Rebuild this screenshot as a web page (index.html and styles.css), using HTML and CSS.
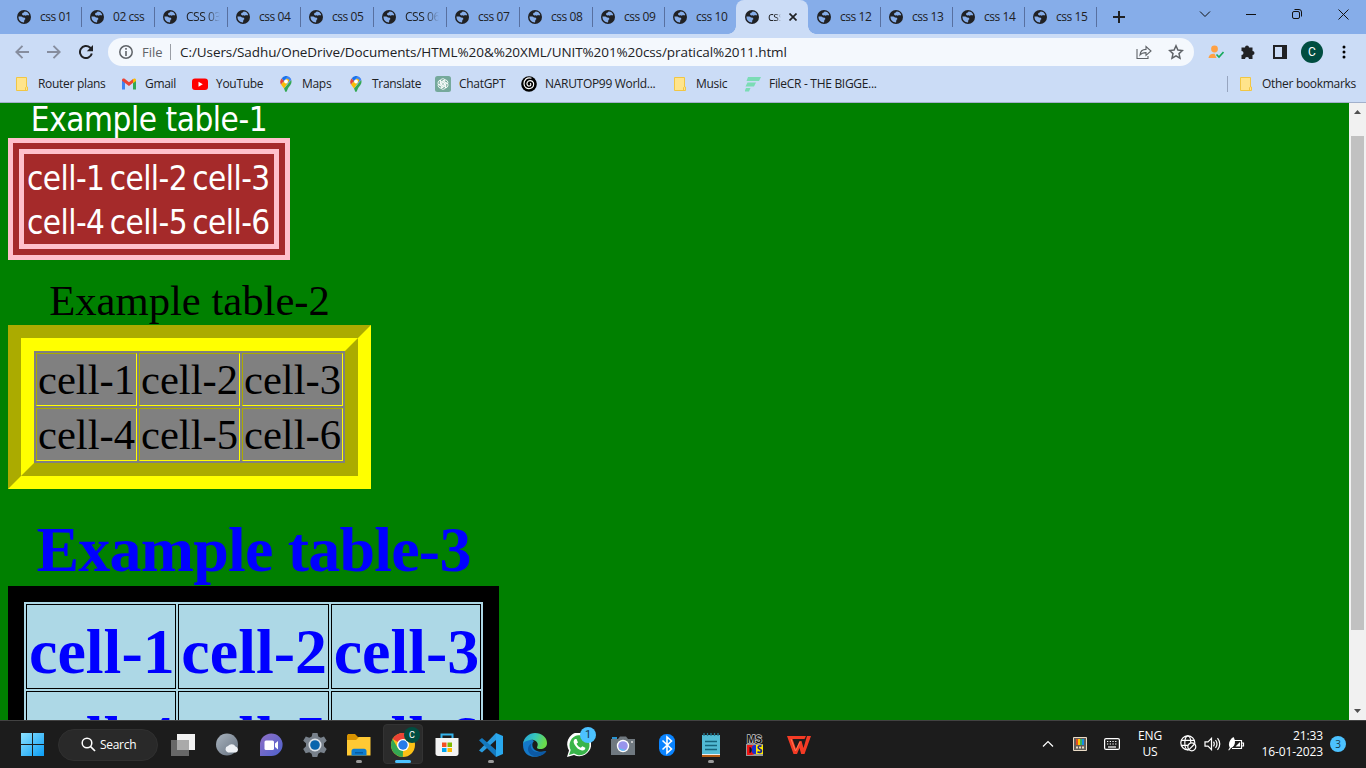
FILE: index.html
```html
<!DOCTYPE html>
<html lang="en">
<head>
<meta charset="utf-8">
<title>css 11</title>
<link rel="stylesheet" href="styles.css">
</head>
<body>
<svg class="defs" width="0" height="0" aria-hidden="true">
  <symbol id="globe" viewBox="0 0 14 14"><circle cx="7" cy="7" r="7" fill="#202124"/><path d="M7.6 1.500C9.800 1.500 11.500 2.700 12.200 4.800L11.300 5.500 10 5 8.800 5.700 7.800 5.200 6.200 5.400 5 4.500 5.400 3 6.800 2.600zM1.500 6.500 4.500 6.500 6 7.500 7.800 7.800 8.500 9 7.400 10 7 12.400C3.800 12.400 1.400 10 1.500 6.500z" fill="#86ade9"/></symbol>
  <symbol id="folder" viewBox="0 0 16 16"><path d="M2.500 1.500h10v9.500h1v3.500h-11z" fill="#ffe48b" stroke="#f1c644"/><path d="M11.500 14v-2.500l1-1" fill="none" stroke="#f1c644"/></symbol>
  <symbol id="pin" viewBox="0 0 16 16"><path d="M4 4 8 0a5.500 5.500 0 0 1 5.300 4L8 9z" fill="#4285f4"/><path d="M3.600 2.400 6 5 3 8.500A5.300 5.300 0 0 1 3.600 2.400z" fill="#ea4335"/><path d="M3 8.500 9 2.500l2.500 1.500L6 12.500z" fill="#fbbc04"/><path d="M13.300 4c.9 3.500-1.200 5.500-2.800 7.500C9.500 13 9 16 8 16s-1.200-2-2-3.500z" fill="#34a853"/><path d="M3.700 2.300A5.500 5.500 0 0 1 9.500.2L6 4.500z" fill="#1a73e8"/><circle cx="8" cy="5.500" r="1.900" fill="#fff"/></symbol>
</svg>

<header class="browser">
  <div class="tabstrip">
    <div class="tab"><svg><use href="#globe"/></svg><span>css 01</span></div>
    <div class="tab"><svg><use href="#globe"/></svg><span>02 css</span></div>
    <div class="tab cut"><svg><use href="#globe"/></svg><span>CSS 03</span></div>
    <div class="tab"><svg><use href="#globe"/></svg><span>css 04</span></div>
    <div class="tab"><svg><use href="#globe"/></svg><span>css 05</span></div>
    <div class="tab cut"><svg><use href="#globe"/></svg><span>CSS 06</span></div>
    <div class="tab"><svg><use href="#globe"/></svg><span>css 07</span></div>
    <div class="tab"><svg><use href="#globe"/></svg><span>css 08</span></div>
    <div class="tab narrow"><svg><use href="#globe"/></svg><span>css 09</span></div>
    <div class="tab narrow bare"><svg><use href="#globe"/></svg><span>css 10</span></div>
    <div class="tab active"><svg><use href="#globe"/></svg><span>css</span><svg class="x" viewBox="0 0 8 8"><path d="M.5.5l7 7M7.500.5l-7 7" stroke="#202124" stroke-width="1.700"/></svg></div>
    <div class="tab narrow"><svg><use href="#globe"/></svg><span>css 12</span></div>
    <div class="tab narrow"><svg><use href="#globe"/></svg><span>css 13</span></div>
    <div class="tab narrow"><svg><use href="#globe"/></svg><span>css 14</span></div>
    <div class="tab narrow"><svg><use href="#globe"/></svg><span>css 15</span></div>
    <div class="newtab"><svg width="12" height="12" viewBox="0 0 12 12"><path d="M6 0v12M0 6h12" stroke="#202124" stroke-width="2"/></svg></div>
    <div class="window-controls">
      <svg width="12" height="10" viewBox="0 0 12 10"><path d="M1 2.500l5 5 5-5" class="thin"/></svg>
      <svg width="10" height="10" viewBox="0 0 10 10"><path d="M0 5.500h10" class="thin"/></svg>
      <svg width="10" height="10" viewBox="0 0 10 10"><rect x=".5" y="2.500" width="7" height="7" rx="1.500" class="thin"/><path d="M2.500.5H7a2.500 2.500 0 0 1 2.500 2.500v4.500" class="thin"/></svg>
      <svg width="11" height="11" viewBox="0 0 11 11"><path d="M.5.5l10 10M10.500.5l-10 10" class="thin"/></svg>
    </div>
  </div>

  <div class="toolbar">
    <div class="nav">
      <svg width="14" height="14" viewBox="0 0 14 14"><path d="M14 7H1.500M7.500 .8 1.300 7l6.200 6.200" fill="none" stroke="#868d9e" stroke-width="1.900"/></svg>
      <svg width="14" height="14" viewBox="0 0 14 14"><path d="M0 7h12.500M6.500.8 12.700 7l-6.200 6.200" fill="none" stroke="#868d9e" stroke-width="1.900"/></svg>
      <svg width="14" height="14" viewBox="0 0 14 14"><path d="M12.800 8.500A6 6 0 1 1 11 2.600l1 1" fill="none" stroke="#202124" stroke-width="2"/><path d="M14 0v6.200H7.800z" fill="#202124"/></svg>
    </div>
    <div class="omnibox">
      <svg width="14" height="14" viewBox="0 0 14 14"><circle cx="7" cy="7" r="6.200" fill="none" stroke="#5f6368" stroke-width="1.500"/><path d="M7 3v1.700M7 6v5" stroke="#5f6368" stroke-width="1.600"/></svg>
      <span class="scheme">File</span>
      <span class="url">C:/Users/Sadhu/OneDrive/Documents/HTML%20&amp;%20XML/UNIT%201%20css/pratical%2011.html</span>
      <svg class="share" width="16" height="16" viewBox="0 0 16 16"><path d="M1 5v9.500h11V12M4 11c.3-3.700 2.500-5.500 6-5.600V2.500L15 7l-5 4.400V8.600C7.500 8.600 5.500 9 4 11z" fill="none" stroke="#5f6368" stroke-width="1.100"/></svg>
      <svg width="16" height="16" viewBox="0 0 16 16"><path d="M8 1.800l1.900 4.300 4.500.4-3.400 3.100 1 4.600L8 11.800l-4 2.400 1-4.600L1.600 6.500l4.500-.4z" fill="none" stroke="#5f6368" stroke-width="1.500"/></svg>
    </div>
    <div class="actions">
      <svg width="16" height="14" viewBox="0 0 16 14"><circle cx="6.500" cy="4" r="3.400" fill="#ffa143"/><path d="M.5 13c.2-3 2.500-4.500 6-4.300L8.500 13z" fill="#ffa143"/><path d="M8.500 9.500 11 12l4.500-5" fill="none" stroke="#17aa5c" stroke-width="1.600"/></svg>
      <svg width="16" height="16" viewBox="0 0 16 16"><path d="M1.500 3.500H5a2 2 0 1 1 4 0h3.500V7a2 2 0 1 1 0 4v4H9a2 2 0 0 0-4 0H1.500v-4a2 2 0 0 0 0-4z" fill="#202124"/></svg>
      <svg width="14" height="14" viewBox="0 0 14 14"><path d="M1 1h12v12H1z" fill="none" stroke="#202124" stroke-width="2"/><path d="M9 1h4v12H9z" fill="#202124"/></svg>
      <span class="avatar">C</span>
      <svg width="4" height="14" viewBox="0 0 4 14"><circle cx="2" cy="2" r="1.500"/><circle cx="2" cy="7" r="1.500"/><circle cx="2" cy="12" r="1.500"/></svg>
    </div>
  </div>

  <nav class="bookmarks">
    <a class="w107"><svg><use href="#folder"/></svg>Router plans</a>
    <a class="w71"><svg viewBox="0 0 16 16"><path d="M1 13.500V3.500l3 2.400v7.600z" fill="#4285f4"/><path d="M12 13.500V5.900l3-2.400v10z" fill="#34a853"/><path d="M1 5V4c0-1.500 1.500-2 2.700-1.200L8 6.200l4-3.200v3.800L8 10 1 4.800z" fill="#ea4335"/><path d="M12 3c1.300-1 3-.500 3 1v1l-3 2.200z" fill="#fbbc04"/></svg>Gmail</a>
    <a class="w86"><svg viewBox="0 0 16 16"><rect y="2.500" width="16" height="11.500" rx="3" fill="#f00"/><path d="M6.500 5.700v5l4.300-2.500z" fill="#fff"/></svg>YouTube</a>
    <a class="w70"><svg><use href="#pin"/></svg>Maps</a>
    <a class="w87"><svg><use href="#pin"/></svg>Translate</a>
    <a class="w86"><svg viewBox="0 0 16 16"><rect width="16" height="16" rx="2.500" fill="#75a99b"/><g fill="none" stroke="#fff" stroke-width=".8"><path id="petal" d="M5.200 9.500V5.200a2.700 2.700 0 0 1 5-1.200L6.800 6v3.500"/><use href="#petal" transform="rotate(60 8 8)"/><use href="#petal" transform="rotate(120 8 8)"/><use href="#petal" transform="rotate(180 8 8)"/><use href="#petal" transform="rotate(240 8 8)"/><use href="#petal" transform="rotate(300 8 8)"/></g></svg>ChatGPT</a>
    <a class="w151"><svg viewBox="0 0 16 16"><circle cx="8" cy="8" r="7.800"/><path d="M10.500 2.200C6 .8 2.800 4 3 8c.3 3.500 3 5 6 4.500 3-.5 4.500-3.500 3.300-6C11 4 7.500 4 6.300 6.300c-1 2 .3 4 2 3.700 1.700-.2 2-2.200.7-2.700" fill="none" stroke="#fff" stroke-width="1.200"/></svg>NARUTOP99 World...</a>
    <a class="w73"><svg><use href="#folder"/></svg>Music</a>
    <a><svg viewBox="0 0 16 16"><path d="M3 1h13l-2 4H1.500zM2.500 6.500H11l-2 4H.5zM1 12h4.500l-1.500 3.500H-.5z" fill="#7bdcb5"/></svg>FileCR - THE BIGGE...</a>
    <a class="other"><svg><use href="#folder"/></svg>Other bookmarks</a>
  </nav>
</header>

<div class="viewport">
  <main class="page">
    <table class="t1">
      <caption>Example table-1</caption>
      <tr><td>cell-1</td><td>cell-2</td><td>cell-3</td></tr>
      <tr><td>cell-4</td><td>cell-5</td><td>cell-6</td></tr>
    </table>
    <table class="t2">
      <caption>Example table-2</caption>
      <tr><td>cell-1</td><td>cell-2</td><td>cell-3</td></tr>
      <tr><td>cell-4</td><td>cell-5</td><td>cell-6</td></tr>
    </table>
    <table class="t3">
      <caption>Example table-3</caption>
      <tr><td>cell-1</td><td>cell-2</td><td>cell-3</td></tr>
      <tr><td>cell-4</td><td>cell-5</td><td>cell-6</td></tr>
    </table>
  </main>
  <div class="scrollbar">
    <svg width="17" height="17" viewBox="0 0 17 17"><path d="M5 11h7L8.500 7z" fill="#505050"/></svg>
    <div class="track"><div class="thumb"></div></div>
    <svg width="17" height="17" viewBox="0 0 17 17"><path d="M5 6h7l-3.500 4z" fill="#505050"/></svg>
  </div>
</div>

<footer class="taskbar">
  <svg class="start" width="23" height="23" viewBox="0 0 23 23"><defs><linearGradient id="win" gradientUnits="userSpaceOnUse" x2="23" y2="23"><stop stop-color="#8de2ff"/><stop offset="1" stop-color="#0a9df5"/></linearGradient></defs><path d="M0 0h11v11H0zM12 0h11v11H12zM0 12h11v11H0zM12 12h11v11H12z" fill="url(#win)"/></svg>
  <div class="search"><svg width="15" height="15" viewBox="0 0 15 15"><circle cx="6" cy="6" r="4.800" fill="none" stroke="#fff" stroke-width="1.500"/><path d="M9.500 9.500l4.500 4.500" stroke="#fff" stroke-width="1.700"/></svg>Search</div>
  <div class="apps">
    <div class="app"><svg viewBox="0 0 24 24"><path d="M6 1h18v16H6z" fill="#f2f2f2"/><path d="M0 7h18v16H0z" fill="#686868"/><path d="M6 7h12v10H6z" fill="#aaa"/></svg></div>
    <div class="app"><svg viewBox="0 0 24 24"><defs><linearGradient id="moon" x2="1" y2="1"><stop stop-color="#a9b3bf"/><stop offset="1" stop-color="#66727f"/></linearGradient></defs><circle cx="12" cy="11.500" r="11" fill="url(#moon)"/><path d="M13 19.500a3.300 3.300 0 0 1 0-6.400 4.500 4.500 0 0 1 7.500.3 3.200 3.200 0 0 1 .5 6.100z" fill="#eef1f5"/></svg></div>
    <div class="app"><svg viewBox="0 0 24 24"><defs><linearGradient id="chat" x2="1" y2="1"><stop stop-color="#8f6fc5"/><stop offset="1" stop-color="#4c61cd"/></linearGradient></defs><path d="M1 23V12A11.300 11.300 0 1 1 12 23z" fill="url(#chat)"/><rect x="5.500" y="7.500" width="9.500" height="9.500" rx="1.500" fill="#fff"/><path d="M16 10.500l3-2.500v8.500l-3-2.500z" fill="#fff"/></svg></div>
    <div class="app"><svg viewBox="0 0 24 24"><path d="M9.500 0h5l.8 3.500 2.500 1.300L21 3.500l2.700 4.300-2.700 2.500v3l2.700 2.600-2.500 4.400-3.600-1-2.400 1.400-.9 3.300H9.500l-.9-3.300-2.400-1.400-3.500 1-2.500-4.400L3 13.300v-3L.2 7.800 2.800 3.500l3.500 1.200L8.700 3.500z" fill="#78818b"/><circle cx="12" cy="12" r="6.500" fill="#dde3e9"/><circle cx="12" cy="12" r="4.800" fill="#0865ad"/></svg></div>
    <div class="app running"><svg viewBox="0 0 24 24"><path d="M0 2.500 1 1h7l3 3h11v5H0z" fill="#d89300"/><path d="M0 7h9l3-3h11.500v18.500H0z" fill="#ffc934"/><path d="M4.500 22.500V18c0-1.300 1-2.300 2.300-2.300h10.400c1.300 0 2.300 1 2.300 2.300v4.500z" fill="#0d7dd0"/><path d="M8 19h8v1.500H8z" fill="#065b9f"/></svg></div>
    <div class="app current"><svg viewBox="0 0 24 24"><circle cx="12" cy="12" r="12" fill="#fbc116"/><path d="M12 12 1.600 6A12 12 0 0 1 22.400 6H12z" fill="#ea4335"/><path d="M1.600 6 6.800 15 12 17.500l-.2 6.500A12 12 0 0 1 1.600 6z" fill="#34a853"/><circle cx="12" cy="12" r="6" fill="#fff"/><circle cx="12" cy="12" r="4.700" fill="#277be8"/></svg><span class="profile">C</span></div>
    <div class="app"><svg viewBox="0 0 24 24"><path d="M6.500 6V1.500h11V6" fill="none" stroke="#35b3ec" stroke-width="2"/><path d="M.5 5h23v15.500c0 1.500-1 2.500-2.500 2.500H3C1.500 23 .5 22 .5 20.500z" fill="#f3f3f3"/><path d="M7 9.500h4.500V14H7z" fill="#f25022"/><path d="M12.500 9.500H17V14h-4.500z" fill="#7fba00"/><path d="M7 15h4.500v4H7z" fill="#00a4ef"/><path d="M12.500 15H17v4h-4.500z" fill="#ffb900"/></svg></div>
    <div class="app running"><svg viewBox="0 0 24 24"><path d="M17 0v7L3 19.500l-3-2z" fill="#2a9cdf"/><path d="M17 24v-7L3 5 0 7.200z" fill="#1478bd"/><path d="M17 0l7 3v18l-7 3z" fill="#29a8ee"/></svg></div>
    <div class="app"><svg viewBox="0 0 24 24"><defs><linearGradient id="edge" x2="1" y2=".3"><stop stop-color="#249ddb"/><stop offset=".5" stop-color="#35c5bd"/><stop offset="1" stop-color="#6adb4b"/></linearGradient></defs><path d="M0 12C0 5 6 4 11 8c-3 3-2 8 3 10 3 1.200 6 1 9 0-6 9-23 8-23-6z" fill="#1478c8"/><path d="M0 11C1 4 6 0 12 0c7 0 12 4.500 12 10 0 4-3 6-7 6-3 0-3.500-1-2.500-3C16 9 11 6 7 7c-4 .7-6.500 2-7 4z" fill="url(#edge)"/><path d="M8.500 10.500c-3 6 4 11 14 7.500.6-.2 1 .2.5 1C17 26 5 24 5 16c0-2.500 1.500-4.500 3.500-5.500z" fill="#0c59a4"/></svg></div>
    <div class="app"><svg viewBox="0 0 24 24"><path d="M0 24l2-6.500A12 12 0 1 1 7 22z" fill="#fff"/><path d="M2 22l1.700-5A10 10 0 1 1 7 20.600z" fill="#39b54a"/><path d="M8 6c-1.500 1-2 3-.5 5.500 2 3.500 4.500 5.500 7.500 6 2 .2 3.500-1 3.300-2.700l-3-1.500-1.500 1.500c-2-.8-3.300-2-4.300-4L11 9.500 9.500 6z" fill="#fff"/></svg><span class="badge">1</span></div>
    <div class="app"><svg viewBox="0 0 24 24"><path d="M1 4h5v3H1z" fill="#2994d1"/><path d="M0 6h7l2-2.500h6L17 6h7v16H0z" fill="#707980"/><circle cx="12" cy="13" r="6.200" fill="#fff"/><circle cx="12" cy="13" r="4.800" fill="#9894ec"/><path d="M7.700 15a4.800 4.800 0 0 0 7 2z" fill="#5ac3f6"/><circle cx="21" cy="9" r="1" fill="#ddd"/></svg></div>
    <div class="app"><svg viewBox="0 0 24 24"><rect x="4" y="1" width="16" height="22" rx="7.500" fill="#0a84ff"/><path d="M7.500 7.500l9 8.500-4.500 4V4l4.500 4-9 8.500" fill="none" stroke="#fff" stroke-width="1.600"/></svg></div>
    <div class="app running"><svg viewBox="0 0 24 24"><path d="M3 2h18v19H3z" fill="#52bbd5"/><path d="M3 21h18v1H3z" fill="#eee"/><path d="M3 22h18v2H3z" fill="#b45d15"/><path d="M6 8.500h12M6 12.500h12M6 16.500h12" stroke="#16657c" stroke-width="1.300"/><path d="M5 0v3M8.500 0v3M12 0v3M15.500 0v3M19 0v3" stroke="#267c94" stroke-width="1.300"/></svg></div>
    <div class="app"><svg viewBox="0 0 24 24" class="msdos"><text x="4" y="9.500" font-size="10" fill="#111" stroke="#c4c4c4" stroke-width="1.400" paint-order="stroke" textLength="15" lengthAdjust="spacingAndGlyphs">MS</text><path d="M3 11h17v12H3z" fill="#999"/><path d="M4 12h4.500c6 0 6 10 0 10H4z" fill="#f01414"/><ellipse cx="12" cy="16.500" rx="3.500" ry="4.500" fill="#1732d0"/><path d="M13 12h7v9h-7z" fill="#ffe900"/><path d="M6.500 14v6c3 0 3-6 0-6z" fill="#111"/><path d="M18.500 13.500c-2-1.500-4 0-3 1.800 1 1.200 3 .7 3 2.700 0 1.500-2.500 2-4 .7" fill="none" stroke="#17209c" stroke-width="1.700"/></svg></div>
    <div class="app"><svg viewBox="0 0 24 24"><path d="M0 3h19l-1.500 3H5.500l3.500 10L12.500 8h2l2 7L20 3h4l-6.500 18h-3.300L12.500 15 10 21H6.500z" fill="#f43b25"/><path d="M4 6l4.500 12L13 9" fill="none" stroke="#ff7a52" stroke-width="1"/></svg></div>
  </div>
  <div class="tray">
    <div class="slot"><svg width="12" height="8" viewBox="0 0 12 8"><path d="M1 6.500l5-5 5 5" class="glyph"/></svg></div>
    <div class="slot"><svg width="14" height="14" viewBox="0 0 14 14"><path d="M.5.5h13v13H.5z" fill="#625e58" stroke="#eadbc6"/><path d="M3 2h2v6H3z" fill="#e34c26"/><path d="M5 2h2v6H5z" fill="#ffc500"/><path d="M7 2h2v6H7z" fill="#35b45c"/><path d="M9 2h2v6H9z" fill="#188be6"/><path d="M3 9.500h2v2H3zM6 9.500h2v2H6zM9 9.500h2v2H9z" fill="#eadbc6"/></svg></div>
    <div class="slot"><svg width="16" height="12" viewBox="0 0 16 12"><rect x=".6" y=".6" width="14.800" height="10.800" rx="1.500" class="glyph"/><path d="M3 3.500h10M3 6h10" class="glyph" stroke-dasharray="1.300 1.400"/><path d="M4 9h8" class="glyph"/></svg></div>
    <div class="lang">ENG<br>US</div>
    <div class="status">
      <svg width="17" height="17" viewBox="0 0 17 17"><circle cx="7.800" cy="7.800" r="7" class="glyph"/><ellipse cx="7.800" cy="7.800" rx="3" ry="7" class="glyph"/><path d="M1.200 5.300h13M1.200 10.300h8" class="glyph"/><circle cx="11.800" cy="11.800" r="4" fill="#1c1c1c" stroke="#fff" stroke-width="1.200"/><path d="M9 14.600l5.600-5.600" class="glyph"/></svg>
      <svg width="17" height="14" viewBox="0 0 17 14"><path d="M1 4.800h3L7.500 1.300v11.400L4 9.200H1zM9.500 4.700q1.500 2.300 0 4.600M11.500 3q3 4 0 8M13.500 1.200q4.500 5.800 0 11.600" class="glyph"/></svg>
      <svg width="17" height="14" viewBox="0 0 17 14"><path d="M5 3.500h8.500v8H4M14 6h1.500v3H14" class="glyph"/><path d="M7.500 9.500h4.500V5z" fill="#fff"/><path d="M5.500 0C8 4 7.500 9 3 11L1 13.500.3 13l1.500-2.500C-.5 7 2 2 5.500 0z" fill="#fff"/></svg>
    </div>
    <div class="clock">21:33<br>16-01-2023</div>
    <span class="count">3</span>
  </div>
</footer>
</body>
</html>
```
FILE: styles.css
```css
* { box-sizing: border-box; }

body {
  margin: 0;
  width: 1366px;
  height: 768px;
  overflow: hidden;
  display: flex;
  flex-direction: column;
  font-family: "Segoe UI", "Open Sans", "Noto Sans", sans-serif;
  font-size: 12px;
  color: #202124;
}

svg { flex: none; display: block; }
.defs { display: none; }

/* Browser chrome */
.browser {
  height: 103px;
  background: #cbdcf6;
  border-bottom: 1px solid #a2b0cb;
  flex: none;
}

.tabstrip {
  display: flex;
  height: 34px;
  padding-left: 8px;
  background: #86ade9;
}

.tab {
  position: relative;
  width: 73px;
  padding-left: 9px;
  display: flex;
  align-items: center;
  flex: none;
  white-space: nowrap;
  font-size: 12px;
  letter-spacing: -0.45px;
}
.tab.narrow, .tab.active { width: 72px; }
.tab svg { width: 14px; height: 14px; margin-right: 9px; }
.tab span { padding-bottom: 1px; }
.tab::after {
  content: "";
  position: absolute;
  right: -1px;
  top: 7px;
  height: 20px;
  width: 1px;
  background: #5870a0;
}
.tab.cut span {
  width: 34px;
  overflow: hidden;
  -webkit-mask-image: linear-gradient(90deg, #000 60%, transparent);
  mask-image: linear-gradient(90deg, #000 60%, transparent);
}
.tab.bare::after { display: none; }
.tab.active {
  background: #cbdcf6;
  border-radius: 8px 8px 0 0;
}
.tab.active span {
  width: 13px;
  overflow: hidden;
  -webkit-mask-image: linear-gradient(90deg, #000 60%, transparent);
  mask-image: linear-gradient(90deg, #000 60%, transparent);
}
.tab.active .x { width: 8px; height: 8px; margin: 0 0 0 8px; }
.tab.active::before,
.tab.active::after {
  content: "";
  position: absolute;
  top: auto;
  bottom: 0;
  width: 8px;
  height: 8px;
}
.tab.active::before { left: -8px; background: radial-gradient(circle at 0 0, transparent 7.5px, #cbdcf6 8px); }
.tab.active::after { right: -8px; background: radial-gradient(circle at 100% 0, transparent 7.5px, #cbdcf6 8px); }

.newtab { width: 46px; display: flex; align-items: center; justify-content: center; }
.window-controls {
  margin-left: auto;
  width: 184px;
  height: 28px;
  display: grid;
  grid-template-columns: repeat(4, 46px);
  place-items: center;
}
.thin { fill: none; stroke: #111; stroke-width: 1; }

.toolbar { display: flex; align-items: center; height: 36px; }
.nav {
  width: 108px;
  padding-left: 15px;
  display: flex;
  gap: 18px;
}
.omnibox {
  width: 1086px;
  height: 28px;
  padding: 0 10px 0 11px;
  display: flex;
  align-items: center;
  border-radius: 14px;
  background: #f4f8fd;
  font-size: 13px;
}
.scheme {
  width: 29px;
  margin: 0 9px 0 9px;
  border-right: 1px solid #9a9ea5;
  line-height: 16px;
  color: #5f6368;
}
.url { white-space: nowrap; font-size: 13.5px; letter-spacing: -0.08px; }
.share { margin: 0 16px 0 auto; }
.actions {
  flex: 1;
  display: grid;
  grid-template-columns: repeat(5, 32px);
  padding-left: 6px;
  place-items: center;
}
.avatar {
  width: 22px;
  height: 22px;
  border-radius: 50%;
  background: #004d40;
  color: #fff;
  font: 12px/22px Roboto, sans-serif;
  text-align: center;
}

.bookmarks {
  display: flex;
  align-items: center;
  height: 28px;
  padding: 0 10px 0 14px;
  font-size: 12px;
  letter-spacing: -0.3px;
}
.bookmarks a { display: flex; align-items: center; gap: 8px; white-space: nowrap; flex: none; line-height: 16px; }
.bookmarks svg { width: 16px; height: 16px; }
.w107 { width: 107px; }
.w71 { width: 71px; }
.w86 { width: 86px; }
.w70 { width: 70px; }
.w87 { width: 87px; }
.w151 { width: 151px; }
.w73 { width: 73px; }
.bookmarks .other {
  margin-left: auto;
  padding-left: 10px;
  height: 16px;
  border-left: 1px solid #97a5bf;
}

/* Document */
.viewport { display: flex; height: 617px; overflow: hidden; flex: none; }
.page {
  flex: 1;
  overflow: hidden;
  padding-left: 8px;
  display: flex;
  flex-direction: column;
  align-items: flex-start;
  gap: 16px;
  background: green;
}
table {
  table-layout: fixed;
  border-collapse: separate;
  border-spacing: 2px;
  flex: none;
  white-space: nowrap;
}
td { padding: 1px; }

.t1 {
  width: 282px;
  border: 16px double pink;
  background: brown;
  color: #fff;
  font: 33px Tahoma, "DejaVu Sans Condensed", sans-serif;
  letter-spacing: -0.45px;
}
.t1 caption { height: 35px; line-height: 34px; padding-bottom: 1px; }
.t1 td { height: 42px; padding: 3px 0 0 1px; line-height: 39px; letter-spacing: -0.55px; }

.t2 {
  width: 363px;
  border: 26px groove yellow;
  background: gray;
  color: #000;
  font: 42.67px/49px "Times New Roman", "Liberation Serif", serif;
}
.t2 caption { height: 49px; }
.t2 td { height: 53px; border: 1px inset yellow; }

.t3 {
  width: 491px;
  border: 16px solid #000;
  background: lightblue;
  color: blue;
  font: bold 64px/73px "Old English Text MT", "Liberation Serif", serif;
}
.t3 caption { height: 81px; padding-top: 8px; letter-spacing: -0.8px; }
.t3 td { height: 85px; padding: 9px 0 0 2px; border: 1px solid #000; }

.scrollbar { width: 17px; display: flex; flex-direction: column; background: #f1f1f1; }
.track { flex: 1; padding: 16px 2px 0; }
.thumb { height: 494px; background: #c1c1c1; }

/* Taskbar */
.taskbar {
  display: flex;
  align-items: center;
  height: 48px;
  padding-left: 21px;
  border-top: 1px solid #424242;
  background: #1c1c1c;
  color: #fff;
  flex: none;
}
.search {
  width: 100px;
  height: 32px;
  margin-left: 14px;
  padding-left: 22px;
  display: flex;
  align-items: center;
  gap: 4px;
  border: 1px solid #303030;
  border-radius: 16px;
  background: #292929;
  letter-spacing: -0.3px;
}
.apps { display: flex; margin-left: 3px; }
.app {
  position: relative;
  width: 44px;
  height: 47px;
  display: flex;
  align-items: center;
  justify-content: center;
}
.app svg { width: 24px; height: 24px; }
.current::before {
  content: "";
  position: absolute;
  inset: 3px 2px 4px;
  border: 1px solid #333;
  border-radius: 4px;
  background: #2b2b2b;
}
.current svg { position: relative; }
.running::after,
.current::after {
  content: "";
  position: absolute;
  bottom: 5px;
  left: 19px;
  width: 6px;
  height: 3px;
  border-radius: 2px;
  background: #9a9a9a;
}
.current::after { left: 14px; width: 16px; background: #4cc2ff; }
.profile, .badge {
  position: absolute;
  top: 6px;
  left: 23px;
  width: 16px;
  height: 16px;
  border-radius: 50%;
  background: #004d40;
  font: 9px/16px Roboto, sans-serif;
  text-align: center;
}
.badge, .count { background: #4cc2ff; color: #16394b; }
.badge { font-size: 11px; }
.msdos { font-family: "Liberation Sans", sans-serif; font-weight: bold; }

.tray { margin-left: auto; display: flex; align-items: center; padding: 0 20px 2px 0; font-size: 12px; line-height: 16px; }
.slot { width: 32px; display: flex; justify-content: center; }
.glyph { fill: none; stroke: #fff; stroke-width: 1.2; }
.lang { width: 44px; text-align: center; letter-spacing: -0.2px; }
.status { display: flex; align-items: center; gap: 7px; width: 72px; margin-left: 8px; }
.clock { width: 71px; text-align: right; letter-spacing: -0.1px; }
.count {
  width: 16px;
  height: 16px;
  margin-left: 7px;
  border-radius: 50%;
  font-size: 10px;
  text-align: center;
}
```
